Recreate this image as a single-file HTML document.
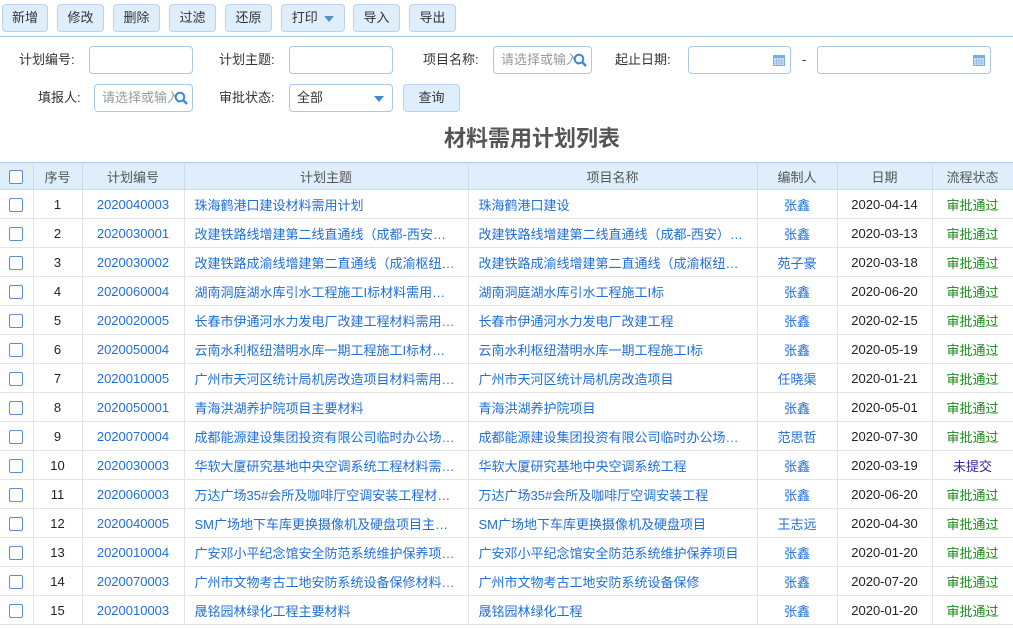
<!DOCTYPE html>
<html><head><meta charset="utf-8"><style>
*{box-sizing:border-box;margin:0;padding:0}
body{width:1013px;height:628px;overflow:hidden;background:#fff;font-family:"Liberation Sans","Noto Sans CJK SC",sans-serif;font-size:13px;color:#333;position:relative}
.btn{position:absolute;top:4px;height:28px;border:1px solid #b9d3ec;border-radius:4px;background:#dfeefb;color:#333;font-size:13px;line-height:26px;text-align:center}
.sep{position:absolute;left:0;top:36px;width:1013px;height:1px;background:#a9c9e6}
.lbl{position:absolute;font-size:13px;color:#333;line-height:27px}
.inp{position:absolute;height:28px;border:1px solid #a9c9e6;border-radius:4px;background:#fff;font-size:13px;line-height:26px;color:#999;padding-left:7px;overflow:hidden;white-space:nowrap}
.title{position:absolute;left:444px;top:121px;font-size:22px;font-weight:bold;color:#555}
table{position:absolute;left:0;top:162px;width:1013px;border-collapse:collapse;table-layout:fixed}
th{height:27px;background:#dfeefb;font-weight:normal;color:#555;border:1px solid #c6dcef;border-top:1px solid #a9c9e6;font-size:13px}
td{height:29px;border:1px solid #e3e3e3;text-align:center;white-space:nowrap;overflow:hidden;text-overflow:ellipsis;font-size:13px;color:#222}
td.l{text-align:left;padding-left:10px;color:#1f6fd8}
td.b{color:#1f6fd8}
td.g{color:#1a8a1a}
td.p{color:#3c20b0}
.cb{display:inline-block;width:14px;height:14px;border:1px solid #5b8fc7;border-radius:2px;vertical-align:middle;background:#fff}
th:first-child,td:first-child{border-left:none}
</style></head><body>
<div class="btn" style="left:2px;width:46px">新增</div>
<div class="btn" style="left:57px;width:47px">修改</div>
<div class="btn" style="left:113px;width:47px">删除</div>
<div class="btn" style="left:169px;width:47px">过滤</div>
<div class="btn" style="left:225px;width:47px">还原</div>
<div class="btn" style="left:281px;width:64px">打印 <span style="display:inline-block;width:0;height:0;border-left:5px solid transparent;border-right:5px solid transparent;border-top:6px solid #5b8fc7;vertical-align:middle;margin-left:3px"></span></div>
<div class="btn" style="left:353px;width:47px">导入</div>
<div class="btn" style="left:409px;width:47px">导出</div>
<div class="sep"></div>

<div class="lbl" style="left:19px;top:46px">计划编号:</div>
<div class="inp" style="left:89px;top:46px;width:104px"></div>
<div class="lbl" style="left:219px;top:46px">计划主题:</div>
<div class="inp" style="left:289px;top:46px;width:104px"></div>
<div class="lbl" style="left:423px;top:46px">项目名称:</div>
<div class="inp" style="left:493px;top:46px;width:99px">请选择或输入<svg style="position:absolute;right:4px;top:6px" width="14" height="14" viewBox="0 0 14 14"><circle cx="6" cy="6" r="4.3" fill="none" stroke="#3a8ad6" stroke-width="2"/><path d="M9 9l4 4" stroke="#3a8ad6" stroke-width="2.4"/></svg></div>
<div class="lbl" style="left:615px;top:46px">起止日期:</div>
<div class="inp" style="left:688px;top:46px;width:103px"><svg style="position:absolute;right:5px;top:7px" width="12" height="12" viewBox="0 0 12 12"><rect x="0.5" y="1.5" width="11" height="10" fill="#cfe2f6" stroke="#7aaee0"/><rect x="0.5" y="1.5" width="11" height="2.5" fill="#7aaee0"/><path d="M0 6.5h12M0 9h12M3.5 4v8M6 4v8M8.5 4v8" stroke="#7aaee0" stroke-width=".6"/></svg></div>
<div class="lbl" style="left:802px;top:46px">-</div>
<div class="inp" style="left:817px;top:46px;width:174px"><svg style="position:absolute;right:5px;top:7px" width="12" height="12" viewBox="0 0 12 12"><rect x="0.5" y="1.5" width="11" height="10" fill="#cfe2f6" stroke="#7aaee0"/><rect x="0.5" y="1.5" width="11" height="2.5" fill="#7aaee0"/><path d="M0 6.5h12M0 9h12M3.5 4v8M6 4v8M8.5 4v8" stroke="#7aaee0" stroke-width=".6"/></svg></div>

<div class="lbl" style="left:38px;top:84px">填报人:</div>
<div class="inp" style="left:94px;top:84px;width:99px">请选择或输入<svg style="position:absolute;right:4px;top:6px" width="14" height="14" viewBox="0 0 14 14"><circle cx="6" cy="6" r="4.3" fill="none" stroke="#3a8ad6" stroke-width="2"/><path d="M9 9l4 4" stroke="#3a8ad6" stroke-width="2.4"/></svg></div>
<div class="lbl" style="left:219px;top:84px">审批状态:</div>
<div class="inp" style="left:289px;top:84px;width:104px;color:#333">全部<span style="position:absolute;right:8px;top:11px;width:0;height:0;border-left:5px solid transparent;border-right:5px solid transparent;border-top:6px solid #3a8ad6"></span></div>
<div class="btn" style="left:403px;top:84px;width:57px">查询</div>

<div class="title">材料需用计划列表</div>

<table>
<colgroup><col style="width:33px"><col style="width:49px"><col style="width:102px"><col style="width:284px"><col style="width:289px"><col style="width:80px"><col style="width:95px"><col style="width:81px"></colgroup>
<tr><th><span class="cb"></span></th><th>序号</th><th>计划编号</th><th>计划主题</th><th>项目名称</th><th>编制人</th><th>日期</th><th>流程状态</th></tr>
<tr><td><span class="cb"></span></td><td>1</td><td class="b">2020040003</td><td class="l">珠海鹤港口建设材料需用计划</td><td class="l">珠海鹤港口建设</td><td class="b">张鑫</td><td>2020-04-14</td><td class="g">审批通过</td></tr>
<tr><td><span class="cb"></span></td><td>2</td><td class="b">2020030001</td><td class="l">改建铁路线增建第二线直通线（成都-西安…</td><td class="l">改建铁路线增建第二线直通线（成都-西安）…</td><td class="b">张鑫</td><td>2020-03-13</td><td class="g">审批通过</td></tr>
<tr><td><span class="cb"></span></td><td>3</td><td class="b">2020030002</td><td class="l">改建铁路成渝线增建第二直通线（成渝枢纽…</td><td class="l">改建铁路成渝线增建第二直通线（成渝枢纽…</td><td class="b">苑子豪</td><td>2020-03-18</td><td class="g">审批通过</td></tr>
<tr><td><span class="cb"></span></td><td>4</td><td class="b">2020060004</td><td class="l">湖南洞庭湖水库引水工程施工I标材料需用…</td><td class="l">湖南洞庭湖水库引水工程施工I标</td><td class="b">张鑫</td><td>2020-06-20</td><td class="g">审批通过</td></tr>
<tr><td><span class="cb"></span></td><td>5</td><td class="b">2020020005</td><td class="l">长春市伊通河水力发电厂改建工程材料需用…</td><td class="l">长春市伊通河水力发电厂改建工程</td><td class="b">张鑫</td><td>2020-02-15</td><td class="g">审批通过</td></tr>
<tr><td><span class="cb"></span></td><td>6</td><td class="b">2020050004</td><td class="l">云南水利枢纽潜明水库一期工程施工I标材…</td><td class="l">云南水利枢纽潜明水库一期工程施工I标</td><td class="b">张鑫</td><td>2020-05-19</td><td class="g">审批通过</td></tr>
<tr><td><span class="cb"></span></td><td>7</td><td class="b">2020010005</td><td class="l">广州市天河区统计局机房改造项目材料需用…</td><td class="l">广州市天河区统计局机房改造项目</td><td class="b">任晓渠</td><td>2020-01-21</td><td class="g">审批通过</td></tr>
<tr><td><span class="cb"></span></td><td>8</td><td class="b">2020050001</td><td class="l">青海洪湖养护院项目主要材料</td><td class="l">青海洪湖养护院项目</td><td class="b">张鑫</td><td>2020-05-01</td><td class="g">审批通过</td></tr>
<tr><td><span class="cb"></span></td><td>9</td><td class="b">2020070004</td><td class="l">成都能源建设集团投资有限公司临时办公场…</td><td class="l">成都能源建设集团投资有限公司临时办公场…</td><td class="b">范思哲</td><td>2020-07-30</td><td class="g">审批通过</td></tr>
<tr><td><span class="cb"></span></td><td>10</td><td class="b">2020030003</td><td class="l">华软大厦研究基地中央空调系统工程材料需…</td><td class="l">华软大厦研究基地中央空调系统工程</td><td class="b">张鑫</td><td>2020-03-19</td><td class="p">未提交</td></tr>
<tr><td><span class="cb"></span></td><td>11</td><td class="b">2020060003</td><td class="l">万达广场35#会所及咖啡厅空调安装工程材…</td><td class="l">万达广场35#会所及咖啡厅空调安装工程</td><td class="b">张鑫</td><td>2020-06-20</td><td class="g">审批通过</td></tr>
<tr><td><span class="cb"></span></td><td>12</td><td class="b">2020040005</td><td class="l">SM广场地下车库更换摄像机及硬盘项目主…</td><td class="l">SM广场地下车库更换摄像机及硬盘项目</td><td class="b">王志远</td><td>2020-04-30</td><td class="g">审批通过</td></tr>
<tr><td><span class="cb"></span></td><td>13</td><td class="b">2020010004</td><td class="l">广安邓小平纪念馆安全防范系统维护保养项…</td><td class="l">广安邓小平纪念馆安全防范系统维护保养项目</td><td class="b">张鑫</td><td>2020-01-20</td><td class="g">审批通过</td></tr>
<tr><td><span class="cb"></span></td><td>14</td><td class="b">2020070003</td><td class="l">广州市文物考古工地安防系统设备保修材料…</td><td class="l">广州市文物考古工地安防系统设备保修</td><td class="b">张鑫</td><td>2020-07-20</td><td class="g">审批通过</td></tr>
<tr><td><span class="cb"></span></td><td>15</td><td class="b">2020010003</td><td class="l">晟铭园林绿化工程主要材料</td><td class="l">晟铭园林绿化工程</td><td class="b">张鑫</td><td>2020-01-20</td><td class="g">审批通过</td></tr>
</table>
</body></html>
